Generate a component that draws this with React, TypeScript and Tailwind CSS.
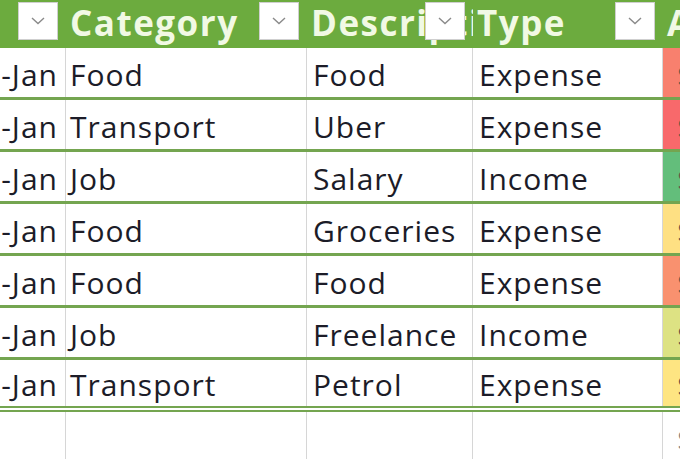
import React from 'react';

const cols = [
  { key: 'date', title: 'Date', w: 'w-[66px]' },
  { key: 'category', title: 'Category', w: 'w-[241px]' },
  { key: 'desc', title: 'Description', w: 'w-[166px]' },
  { key: 'type', title: 'Type', w: 'w-[190px]' },
  { key: 'amount', title: 'Amount', w: 'w-[120px]' },
];

const rows = [
  { date: '1-Jan', category: 'Food', desc: 'Food', type: 'Expense', color: 'bg-[#f8806e]' },
  { date: '2-Jan', category: 'Transport', desc: 'Uber', type: 'Expense', color: 'bg-[#f8696b]' },
  { date: '3-Jan', category: 'Job', desc: 'Salary', type: 'Income', color: 'bg-[#63be7b]' },
  { date: '4-Jan', category: 'Food', desc: 'Groceries', type: 'Expense', color: 'bg-[#fee083]' },
  { date: '5-Jan', category: 'Food', desc: 'Food', type: 'Expense', color: 'bg-[#f9916f]' },
  { date: '6-Jan', category: 'Job', desc: 'Freelance', type: 'Income', color: 'bg-[#dde283]' },
  { date: '7-Jan', category: 'Transport', desc: 'Petrol', type: 'Expense', color: 'bg-[#fee582]' },
];

const FilterButton = () => (
  <div className="absolute right-[8px] top-[2px] flex h-[38px] w-[40px] items-center justify-center border border-[#cfcfcf] bg-white">
    <svg width="14" height="8" viewBox="0 0 14 8" fill="none">
      <path d="M1 1l6 5.5L13 1" stroke="#8a8a8a" strokeWidth="1.4" />
    </svg>
  </div>
);

const App: React.FC = () => {
  return (
    <div
      className="h-[459px] w-[680px] overflow-hidden bg-white text-[#1c1c28]"
      style={{ fontFamily: '"Open Sans", Lato, sans-serif' }}
    >
      {/* Header */}
      <div className="flex h-[48px] w-[800px] bg-[#6cab3e]">
        {cols.map((c) => (
          <div key={c.key} className={`relative shrink-0 overflow-hidden ${c.w}`}>
            {c.key !== 'date' && (
              <span className="absolute left-[4px] top-[2px] whitespace-nowrap text-[35px] font-bold leading-[42px] tracking-[1.5px] text-[#f1f9e4]">
                {c.title}
              </span>
            )}
            <FilterButton />
          </div>
        ))}
      </div>

      {/* Rows */}
      {rows.map((r, i) => (
        <div
          key={i}
          className={`flex h-[52px] w-[800px] border-b-[3px] border-[#74a550] text-[30px] tracking-[1px] ${i === rows.length - 1 ? 'border-double border-b-[6px]' : ''}`}
        >
          <div className="flex w-[66px] shrink-0 items-center justify-end overflow-hidden border-r border-[#d6d6d6] pr-[7px] pt-[3px]">
            <span className="whitespace-nowrap">{r.date}</span>
          </div>
          <div className="flex w-[241px] shrink-0 items-center border-r border-[#d6d6d6] pl-[4px] pt-[3px]">
            {r.category}
          </div>
          <div className="flex w-[166px] shrink-0 items-center overflow-hidden border-r border-[#d6d6d6] pl-[6px] pt-[3px]">
            {r.desc}
          </div>
          <div className="flex w-[190px] shrink-0 items-center border-r border-[#d6d6d6] pl-[6px] pt-[3px]">
            {r.type}
          </div>
          <div className={`flex w-[120px] shrink-0 items-center pl-[14px] pt-[3px] ${r.color}`}>
            <span className="text-[#6a5a4a]">$</span>
          </div>
        </div>
      ))}

      {/* Empty row */}
      <div className="flex h-[52px] w-[800px]">
        <div className="w-[66px] shrink-0 border-r border-[#d6d6d6]" />
        <div className="w-[241px] shrink-0 border-r border-[#d6d6d6]" />
        <div className="w-[166px] shrink-0 border-r border-[#d6d6d6]" />
        <div className="w-[190px] shrink-0 border-r border-[#d6d6d6]" />
        <div className="flex w-[120px] shrink-0 items-center pl-[14px] text-[30px] text-[#888]">$</div>
      </div>
    </div>
  );
};

export default App;
